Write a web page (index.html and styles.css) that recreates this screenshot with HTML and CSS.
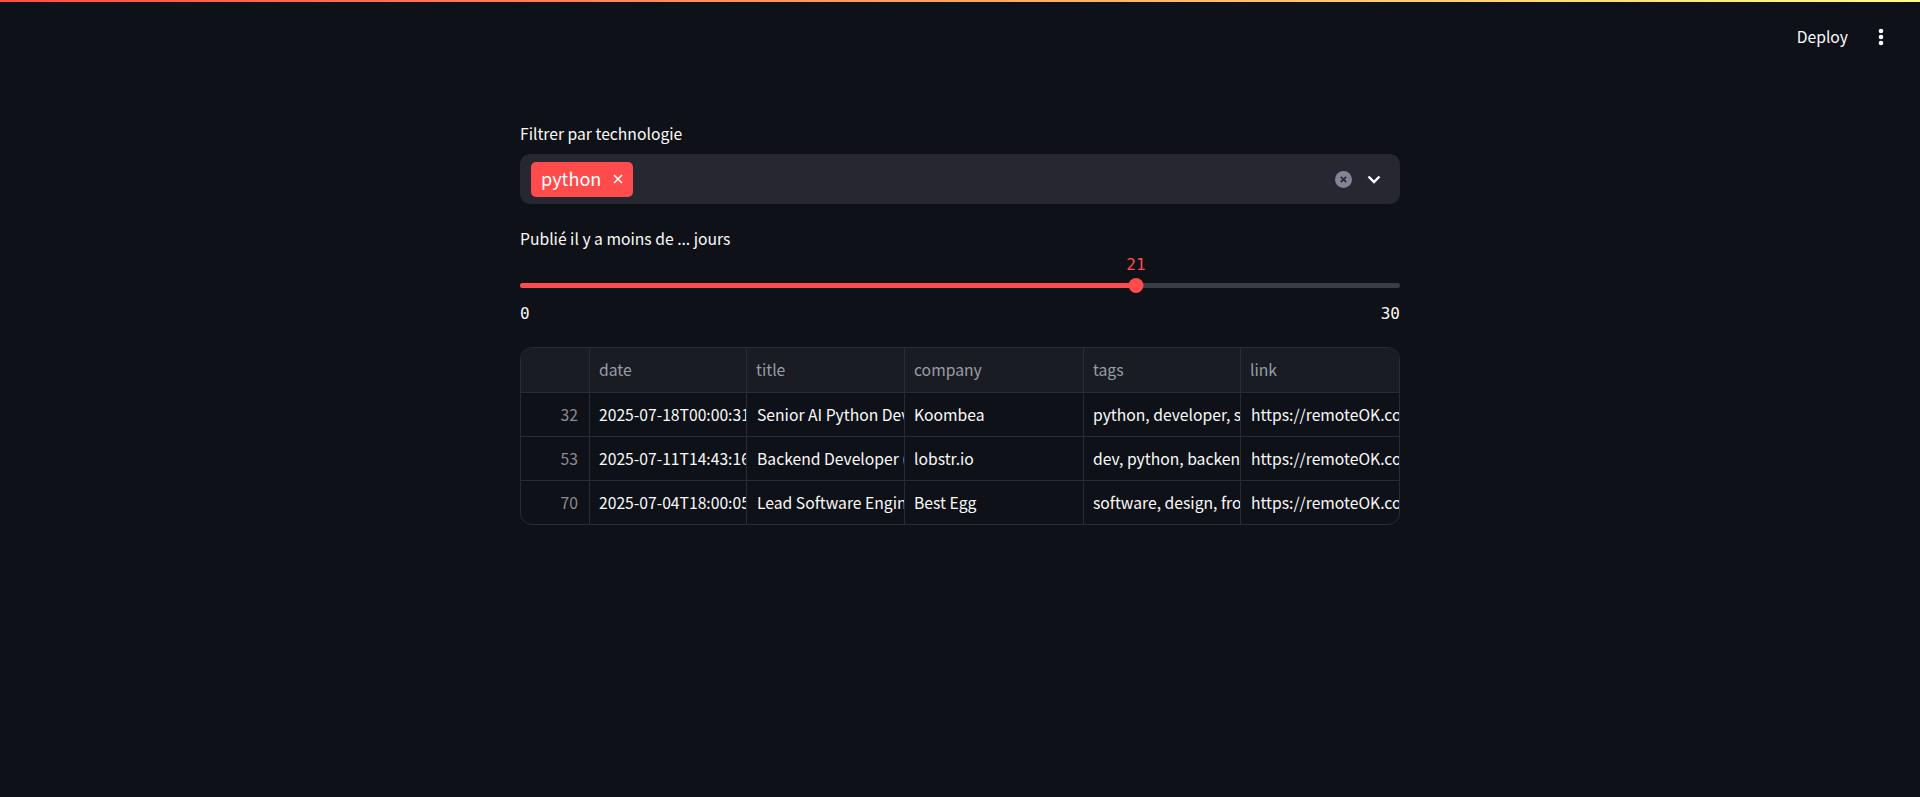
FILE: index.html
```html
<!DOCTYPE html>
<html lang="en">
<head>
    <meta charset="UTF-8">
    <meta name="viewport" content="width=device-width, initial-scale=1.0">
    <title>Offres</title>
    <link rel="stylesheet" href="styles.css">
</head>
<body>
    <div class="top-line"></div>
    <header class="toolbar">
        <span class="deploy">Deploy</span>
        <svg class="kebab" width="6" height="18" viewBox="0 0 6 18"><circle cx="3" cy="3" r="2.3"/><circle cx="3" cy="9" r="2.3"/><circle cx="3" cy="15" r="2.3"/></svg>
    </header>

    <main class="container">
        <label class="field-label">Filtrer par technologie</label>
        <div class="select">
            <span class="pill">
                <span>python</span>
                <svg width="10" height="10" viewBox="0 0 10 10"><path d="M1 1 L9 9 M9 1 L1 9"/></svg>
            </span>
            <span class="select-icons">
                <svg class="clear" width="17" height="17" viewBox="0 0 17 17"><circle cx="8.5" cy="8.5" r="8.5"/><path d="M5.8 5.8 L11.2 11.2 M11.2 5.8 L5.8 11.2"/></svg>
                <svg class="chevron" width="14" height="9" viewBox="0 0 14 9"><path d="M1.5 1.5 L7 7 L12.5 1.5"/></svg>
            </span>
        </div>

        <label class="field-label second">Publié il y a moins de ... jours</label>
        <div class="slider">
            <div class="slider-value" style="left: 70%">21</div>
            <div class="track">
                <div class="track-fill" style="width: 70%"></div>
                <div class="thumb" style="left: 70%"></div>
            </div>
            <div class="slider-range"><span>0</span><span>30</span></div>
        </div>

        <div class="table-wrap">
            <table>
                <colgroup>
                    <col class="col-index">
                    <col class="col-date">
                    <col class="col-title">
                    <col class="col-company">
                    <col class="col-tags">
                    <col class="col-link">
                </colgroup>
                <thead>
                    <tr>
                        <th></th>
                        <th>date</th>
                        <th>title</th>
                        <th>company</th>
                        <th>tags</th>
                        <th>link</th>
                    </tr>
                </thead>
                <tbody>
                    <tr>
                        <td class="index">32</td>
                        <td>2025-07-18T00:00:31</td>
                        <td class="wide-pad">Senior AI Python Developer</td>
                        <td>Koombea</td>
                        <td>python, developer, senior</td>
                        <td class="wide-pad">https://remoteOK.com/remote-jobs</td>
                    </tr>
                    <tr>
                        <td class="index">53</td>
                        <td>2025-07-11T14:43:16</td>
                        <td class="wide-pad">Backend Developer (Python)</td>
                        <td>lobstr.io</td>
                        <td>dev, python, backend</td>
                        <td class="wide-pad">https://remoteOK.com/remote-jobs</td>
                    </tr>
                    <tr>
                        <td class="index">70</td>
                        <td>2025-07-04T18:00:05</td>
                        <td class="wide-pad">Lead Software Engineer</td>
                        <td>Best Egg</td>
                        <td>software, design, frontend</td>
                        <td class="wide-pad">https://remoteOK.com/remote-jobs</td>
                    </tr>
                </tbody>
            </table>
        </div>
    </main>
</body>
</html>
```

FILE: styles.css
```css
* {
    box-sizing: border-box;
}
html, body {
    height: 100%;
}
body {
    margin: 0;
    background-color: #0e1117;
    color: #fafafa;
    font-family: "Noto Sans CJK SC", "Noto Sans", sans-serif;
    font-size: 15.7px;
    overflow: hidden;
}
.top-line {
    height: 2px;
    background: linear-gradient(90deg, #ff4b4b, #fffd80);
}
.toolbar {
    height: 70px;
    display: flex;
    align-items: center;
    justify-content: flex-end;
    gap: 30px;
    padding-right: 36px;
}
.deploy {
    line-height: 24px;
}
.kebab {
    fill: #fafafa;
}
.container {
    width: 880px;
    margin: 0 auto;
    padding-top: 50px;
}
.field-label {
    display: block;
    height: 24px;
    line-height: 24px;
    margin-bottom: 8px;
}
.field-label.second {
    margin-top: 23px;
}
.select {
    height: 50px;
    background-color: #262730;
    border-radius: 10px;
    display: flex;
    align-items: center;
    justify-content: space-between;
    padding: 0 19px 0 11px;
}
.pill {
    height: 35px;
    width: 102px;
    background-color: #ff4b4b;
    border-radius: 5px;
    display: flex;
    align-items: center;
    gap: 12px;
    padding: 0 0 2px 10px;
    font-size: 18.1px;
    color: #fff;
}
.pill svg {
    margin-top: 2px;
    stroke: #fff;
    stroke-width: 1.6;
    fill: none;
}
.select-icons {
    display: flex;
    align-items: center;
    gap: 15px;
}
.clear circle {
    fill: #808495;
}
.clear path {
    stroke: #262730;
    stroke-width: 1.7;
}
.chevron {
    fill: none;
    stroke: #fff;
    stroke-width: 2.4;
}
.slider {
    position: relative;
    padding-top: 24px;
}
.slider-value {
    position: absolute;
    top: -5px;
    transform: translateX(-50%);
    color: #ff4b4b;
    font-family: "DejaVu Sans Mono", monospace;
    font-size: 16px;
    line-height: 22px;
}
.track {
    position: relative;
    height: 5px;
    background-color: #3a3b44;
    border-radius: 3px;
}
.track-fill {
    height: 100%;
    background-color: #ff4b4b;
    border-radius: 3px;
}
.thumb {
    position: absolute;
    top: -5px;
    width: 15px;
    height: 15px;
    transform: translateX(-50%);
    border-radius: 50%;
    background-color: #ff4b4b;
}
.slider-range {
    display: flex;
    justify-content: space-between;
    margin-top: 15px;
    font-family: "DejaVu Sans Mono", monospace;
    font-size: 16px;
    line-height: 22px;
}
.table-wrap {
    margin-top: 22px;
    border: 1px solid #2a2c33;
    border-radius: 12px;
    overflow: hidden;
}
table {
    width: 100%;
    table-layout: fixed;
    border-collapse: separate;
    border-spacing: 0;
}
.col-index { width: 69px; }
.col-date { width: 157px; }
.col-title { width: 158px; }
.col-company { width: 179px; }
.col-tags { width: 157px; }
.col-link { width: 158px; }
th, td {
    padding: 0 0 0 9px;
    text-align: left;
    white-space: nowrap;
    overflow: hidden;
    font-weight: 400;
    border-right: 1px solid #2a2c33;
    border-bottom: 1px solid #2a2c33;
}
th:last-child, td:last-child {
    border-right: none;
}
tbody tr:last-child td {
    height: 43px;
    border-bottom: none;
}
th {
    height: 45px;
    padding-bottom: 2px;
    background-color: #1a1c24;
    color: #9a9ca5;
}
td {
    height: 44px;
    padding-bottom: 1px;
}
td.wide-pad {
    padding-left: 10px;
}
td.index {
    text-align: right;
    padding: 0 11px 1px 0;
    color: #8a8c94;
}
```
